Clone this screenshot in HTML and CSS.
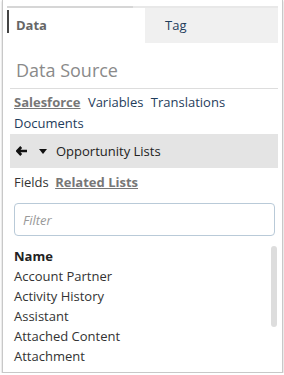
FILE: index.html
```html
<!DOCTYPE html>
<html lang="en">
<head>
    <meta charset="UTF-8">
    <title>Data Panel</title>
    <link rel="stylesheet" href="styles.css">
</head>
<body>
    <div class="panel">
        <div class="tab-bar"><div class="tab-bar-fill"></div></div>
        <div class="tabs">
            <div class="tab active">Data</div>
            <div class="tab">Tag</div>
        </div>

        <div class="content">
            <h2 class="title">Data Source</h2>
            <div class="sources">
                <a class="current">Salesforce</a>
                <a>Variables</a>
                <a>Translations</a>
                <a>Documents</a>
            </div>

            <div class="crumb">
                <svg class="back" width="11" height="10" viewBox="0 0 11 10">
                    <path d="M5.2 1 L1.4 5 L5.2 9 M1.8 5 H11" fill="none" stroke="#111" stroke-width="2.6"/>
                </svg>
                <svg class="caret" width="8" height="5" viewBox="0 0 8 5">
                    <path d="M0 0 H8 L4 5 Z" fill="#111"/>
                </svg>
                <span>Opportunity Lists</span>
            </div>

            <div class="subtabs">
                <span>Fields</span>
                <span class="current">Related Lists</span>
            </div>

            <input class="filter" type="text" placeholder="Filter">

            <div class="list">
                <div class="list-head">Name</div>
                <div class="item">Account Partner</div>
                <div class="item">Activity History</div>
                <div class="item">Assistant</div>
                <div class="item">Attached Content</div>
                <div class="item">Attachment</div>
                <div class="scroll"></div>
            </div>
        </div>
    </div>
</body>
</html>
```

FILE: styles.css
```css
body {
    margin: 0;
    font-family: 'Open Sans', sans-serif;
    font-size: 13px;
    color: #222;
    background: #fff;
}
.panel {
    width: 281px;
    height: 373px;
    margin-left: 2px;
    padding: 6px 4px 0 4px;
    box-sizing: border-box;
    border: 1px solid #c8c8c8;
    border-top: none;
    box-shadow: 0 1px 2px rgba(0, 0, 0, 0.25);
    overflow: hidden;
}
.tab-bar {
    height: 2px;
    background: #e8e8e8;
}
.tab-bar-fill {
    width: 126px;
    height: 2px;
    background: #d6d6d6;
}
.tabs {
    display: flex;
    height: 35px;
}
.tab {
    width: 133px;
    padding-left: 20px;
    box-sizing: border-box;
    line-height: 35px;
    background: #f0f0f0;
    color: #1f3d5c;
    font-size: 13px;
}
.tab.active {
    position: relative;
    width: 138px;
    padding-left: 9px;
    background: #fff;
    color: #666;
    font-weight: bold;
}
.tab.active::before {
    content: "";
    position: absolute;
    left: 0;
    top: 2px;
    width: 2px;
    height: 23px;
    background: #444;
}
.content {
    padding-left: 3px;
}
.title {
    margin: 0;
    padding: 14px 0 5px 6px;
    font-size: 18px;
    font-weight: normal;
    color: #8a8a8a;
    line-height: 26px;
    border-bottom: 1px solid #ddd;
}
.sources {
    padding: 3px 0 0 4px;
    line-height: 21px;
}
.sources a {
    color: #1f3d5c;
    margin-right: 4px;
}
.sources a.current {
    color: #777;
    font-weight: bold;
    text-decoration: underline;
}
.crumb {
    display: flex;
    align-items: center;
    height: 34px;
    padding-left: 6px;
    background: #e4e4e4;
    color: #222;
}
.crumb .back {
    margin-right: 12px;
}
.crumb .caret {
    margin-right: 9px;
}
.subtabs {
    padding: 5px 0 0 4px;
    line-height: 19px;
    color: #333;
}
.subtabs .current {
    margin-left: 3px;
    color: #777;
    font-weight: bold;
    text-decoration: underline;
}
.filter {
    display: block;
    width: 261px;
    height: 33px;
    margin: 11px 0 0 4px;
    padding: 0 8px;
    box-sizing: border-box;
    border: 1px solid #b9cad8;
    border-radius: 4px;
    font-family: 'Open Sans', sans-serif;
    font-size: 13px;
}
.filter::placeholder {
    color: #999;
    font-style: italic;
}
.list {
    position: relative;
    padding: 10px 0 0 4px;
    line-height: 20px;
    color: #333;
}
.list-head {
    font-weight: bold;
    color: #222;
}
.scroll {
    position: absolute;
    top: 10px;
    right: 1px;
    width: 6px;
    height: 81px;
    border-radius: 3px;
    background: #ddd;
}
```
